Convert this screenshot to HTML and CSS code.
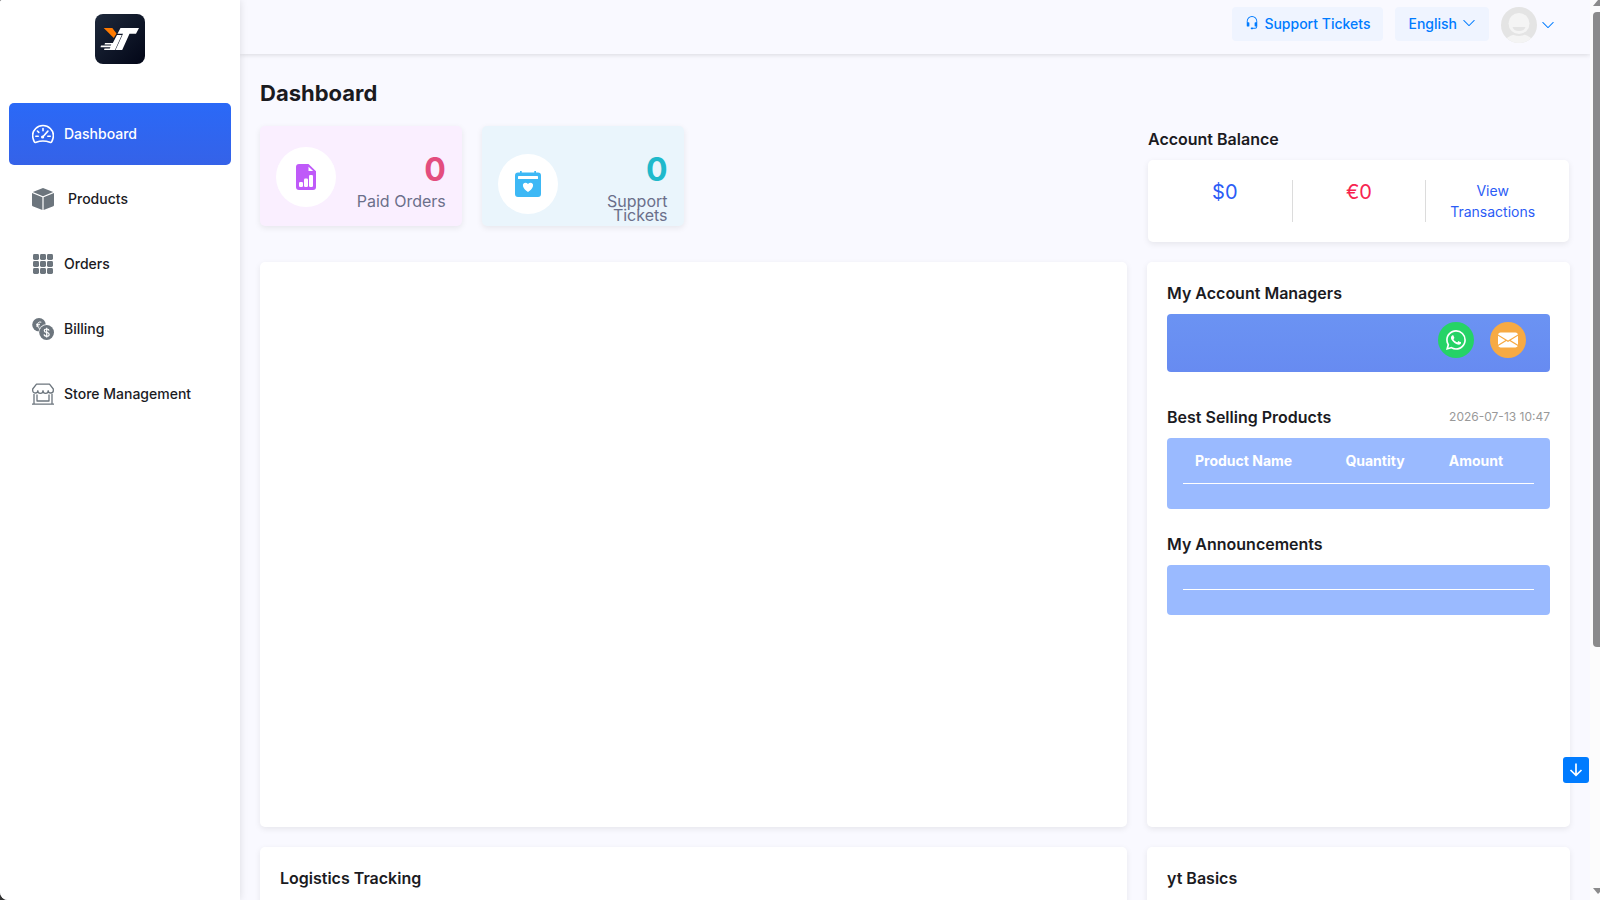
FILE: index.html
```html
<!DOCTYPE html>
<html lang="en">
<head>
  <meta charset="UTF-8">
  <title>Dashboard</title>
  <meta name="viewport" content="width=device-width, initial-scale=1.0">
  <link rel="stylesheet" href="styles.css">
</head>
<body>

  <aside class="sidebar">
    <a class="logo" href="#" aria-label="YT home">
      <svg viewBox="0 0 50 50" width="50" height="50">
        <defs>
          <linearGradient id="logoBg" x1="0" y1="0" x2="1" y2="1">
            <stop offset="0" stop-color="#1e293b"/>
            <stop offset="1" stop-color="#020617"/>
          </linearGradient>
        </defs>
        <rect width="50" height="50" rx="8" fill="url(#logoBg)"/>
        <path fill="#ff7a00" d="M8.700 14h8.600l4.200 5.500-2.700 4.500z"/>
        <path fill="#fff" d="M25.500 14H44l-3 5.800h-6.500L27.200 36H20.500L28 19.800h-5.500z"/>
        <path fill="#fff" d="M22 21h4.800L20 36h-7.500H9l.5-1.500h5.300l.6-1.300H5.500l.5-1.600h9.800l.5-1.200H9.500l.5-1.500h7.800z"/>
      </svg>
    </a>

    <nav class="menu">
      <a class="menu-item active" href="#">
        <svg viewBox="0 0 22 22" width="22" height="22" fill="none" stroke="currentColor" stroke-width="1.600" stroke-linecap="round" stroke-linejoin="round">
          <path d="M2.200 18.600C-.4 13.200.6 8.500 3.700 5.500a10.300 10.300 0 0 1 14.600 0c3.100 3 4.100 7.700 1.500 13.100-.4.800-1.200 1-2 .7-4.500-1.700-9.100-1.700-13.600 0-.8.300-1.600.1-2-.7z"/>
          <path d="M11 5.500v2.300M5.400 8l1.400 1.400M3.800 13.200h2.400M15.800 13.200h2.400M10.500 14.200l5.400-6.100"/>
          <circle cx="10.600" cy="14" r=".8"/>
        </svg>
        <span>Dashboard</span>
      </a>
      <a class="menu-item" href="#">
        <svg viewBox="0 0 22 22" width="22" height="22" fill="currentColor">
          <path d="M11 0l10.200 3.900L11 8.200.8 3.900z"/>
          <path d="M0 5l10.400 4.300V22L.7 18.200A1 1 0 0 1 0 17.300zM22 5L11.600 9.300V22l9.700-3.800a1 1 0 0 0 .7-.9z"/>
        </svg>
        <span class="indent">Products</span>
      </a>
      <a class="menu-item" href="#">
        <svg viewBox="0 0 22 22" width="22" height="22" fill="currentColor">
          <rect x="1" y="1" width="6" height="6" rx="1.400"/><rect x="8" y="1" width="6" height="6" rx="1.400"/><rect x="15" y="1" width="6" height="6" rx="1.400"/>
          <rect x="1" y="8" width="6" height="6" rx="1.400"/><rect x="8" y="8" width="6" height="6" rx="1.400"/><rect x="15" y="8" width="6" height="6" rx="1.400"/>
          <rect x="1" y="15" width="6" height="6" rx="1.400"/><rect x="8" y="15" width="6" height="6" rx="1.400"/><rect x="15" y="15" width="6" height="6" rx="1.400"/>
        </svg>
        <span>Orders</span>
      </a>
      <a class="menu-item" href="#">
        <svg viewBox="0 0 22 22" width="22" height="22">
          <circle cx="7" cy="6.800" r="6.800" fill="currentColor"/>
          <path d="M9.300 4.200C6.800 3.400 5.400 5 5.400 7s1 3.200 2.300 3.300M4 6.300h4M4 8h3.300" fill="none" stroke="#fff" stroke-width="1"/>
          <circle cx="14.600" cy="14.500" r="8.200" fill="#fff"/>
          <circle cx="14.600" cy="14.500" r="7.400" fill="currentColor"/>
          <path d="M17 12.600c-.1-1-.9-1.600-2.300-1.600s-2.400.6-2.400 1.700c0 2.400 4.900 1.100 4.900 3.700 0 1.100-1 1.800-2.500 1.800s-2.500-.7-2.600-1.800M14.700 9.800v9.600" fill="none" stroke="#fff" stroke-width="1.200"/>
        </svg>
        <span>Billing</span>
      </a>
      <a class="menu-item" href="#">
        <svg viewBox="0 0 22 22" width="22" height="22" fill="none" stroke="currentColor" stroke-width="1.300" stroke-linejoin="round">
          <path d="M4.500 1.200h13L21.300 6v1.200a2.500 2.500 0 0 1-5.100.5 2.600 2.600 0 0 1-5.200 0 2.600 2.600 0 0 1-5.200 0 2.500 2.500 0 0 1-5.100-.5V6z"/>
          <path d="M0 21.200h22M2 11v10M20 11v10M5 11.500V18h12v-6.500"/>
        </svg>
        <span>Store Management</span>
      </a>
    </nav>
  </aside>

  <div class="page">
    <header class="topbar">
      <a class="top-btn" href="#">
        <svg viewBox="0 0 16 16" width="14" height="14" fill="currentColor"><path d="M8 1a5 5 0 0 0-5 5v1h1a1 1 0 0 1 1 1v3a1 1 0 0 1-1 1H3a1 1 0 0 1-1-1V6a6 6 0 1 1 12 0v6a2.500 2.500 0 0 1-2.500 2.500H9.366a1 1 0 0 1-.866.5h-1a1 1 0 1 1 0-2h1a1 1 0 0 1 .866.5H11.500A1.500 1.500 0 0 0 13 12h-1a1 1 0 0 1-1-1V8a1 1 0 0 1 1-1h1V6a5 5 0 0 0-5-5z"/></svg>
        Support Tickets
      </a>
      <button class="top-btn" type="button">
        English
        <svg viewBox="0 0 16 16" width="14" height="14" fill="currentColor"><path d="M1.646 4.646a.5.5 0 0 1 .708 0L8 10.293l5.646-5.647a.5.5 0 0 1 .708.708l-6 6a.5.5 0 0 1-.708 0l-6-6a.5.5 0 0 1 0-.708z"/></svg>
      </button>
      <button class="user-btn" type="button" aria-label="Account menu">
        <svg viewBox="0 0 36 36" width="36" height="36">
          <defs><clipPath id="avatarClip"><circle cx="18" cy="18" r="18"/></clipPath></defs>
          <g clip-path="url(#avatarClip)">
            <rect width="36" height="36" fill="#e4e4e4"/>
            <ellipse cx="18" cy="37" rx="15" ry="10" fill="#f4f4f4"/>
            <circle cx="18" cy="17" r="12" fill="#e4e4e4"/>
            <circle cx="18" cy="16.500" r="10.500" fill="#f4f4f4"/>
            <path d="M11.500 20h13c-1 3-3.500 4-6.500 4s-5.500-1-6.500-4z" fill="#e4e4e4"/>
          </g>
        </svg>
        <svg viewBox="0 0 16 16" width="14" height="14" fill="currentColor"><path d="M1.646 4.646a.5.5 0 0 1 .708 0L8 10.293l5.646-5.647a.5.5 0 0 1 .708.708l-6 6a.5.5 0 0 1-.708 0l-6-6a.5.5 0 0 1 0-.708z"/></svg>
      </button>
    </header>

    <main class="content">
      <h1>Dashboard</h1>

      <div class="row">
        <div class="stats">
          <div class="stat stat-pink">
            <div class="stat-icon">
              <svg viewBox="0 0 26 26" width="26" height="26">
                <path fill="#bf5af9" d="M6 0h9.500L23 7.200V23a3 3 0 0 1-3 3H6a3 3 0 0 1-3-3V3a3 3 0 0 1 3-3z"/>
                <path fill="#fff" d="M15.500 2.800V7h4.700z"/>
                <rect x="6" y="18" width="4" height="5" rx="1.200" fill="#fff"/><rect x="11" y="14.500" width="4" height="8.500" rx="1.200" fill="#fff"/><rect x="16" y="11" width="4" height="12" rx="1.200" fill="#fff"/>
              </svg>
            </div>
            <div class="stat-text">
              <div class="stat-value">0</div>
              <div class="stat-label">Paid Orders</div>
            </div>
          </div>
          <div class="stat stat-blue">
            <div class="stat-icon">
              <svg viewBox="0 0 26 26" width="26" height="26">
                <path fill="#3db8f5" d="M5 0h1.700v1.500h12.600V0H21v1.500h2a3 3 0 0 1 3 3V23a3 3 0 0 1-3 3H3a3 3 0 0 1-3-3V4.500a3 3 0 0 1 3-3h2z"/>
                <rect x="3" y="5" width="20" height="3" rx=".6" fill="#fff"/>
                <path fill="#fff" d="M13 13c2.200-2.300 6-.9 4.900 2.500C17.300 17.500 15.400 19.500 13 21c-2.400-1.500-4.300-3.500-4.900-5.500C7 12.100 10.800 10.700 13 13z"/>
              </svg>
            </div>
            <div class="stat-text">
              <div class="stat-value">0</div>
              <div class="stat-label">Support Tickets</div>
            </div>
          </div>
        </div>

        <section class="balance">
          <h2>Account Balance</h2>
          <div class="card balance-card">
            <div class="usd">$0</div>
            <div class="eur">€0</div>
            <div><a href="#">View Transactions</a></div>
          </div>
        </section>

        <section class="card chart"></section>

        <section class="card">
          <h2>My Account Managers</h2>
          <div class="managers">
            <a class="round whatsapp" href="#" aria-label="WhatsApp">
              <svg viewBox="0 0 16 16" width="20" height="20" fill="currentColor"><path d="M13.601 2.326A7.854 7.854 0 0 0 7.994 0C3.627 0 .068 3.558.064 7.926c0 1.399.366 2.760 1.057 3.965L0 16l4.204-1.102a7.933 7.933 0 0 0 3.790.965h.004c4.368 0 7.926-3.558 7.930-7.930A7.898 7.898 0 0 0 13.600 2.326zM7.994 14.521a6.573 6.573 0 0 1-3.356-.92l-.24-.144-2.494.654.666-2.433-.156-.251a6.560 6.560 0 0 1-1.007-3.505c0-3.626 2.957-6.584 6.591-6.584a6.560 6.560 0 0 1 4.660 1.931 6.557 6.557 0 0 1 1.928 4.660c-.004 3.639-2.961 6.592-6.592 6.592zm3.615-4.934c-.197-.099-1.170-.578-1.353-.646-.182-.065-.315-.099-.445.099-.133.197-.513.646-.627.775-.114.133-.232.148-.43.050-.197-.1-.836-.308-1.592-.985-.59-.525-.985-1.175-1.103-1.372-.114-.198-.011-.304.088-.403.087-.088.197-.232.296-.346.1-.114.133-.198.198-.33.065-.134.034-.248-.015-.347-.05-.099-.445-1.076-.612-1.470-.16-.389-.323-.335-.445-.34-.114-.007-.247-.007-.38-.007a.729.729 0 0 0-.529.247c-.182.198-.691.677-.691 1.654 0 .977.710 1.916.810 2.049.098.133 1.394 2.132 3.383 2.992.470.205.840.326 1.129.418.475.152.904.129 1.246.080.380-.058 1.171-.48 1.338-.943.164-.464.164-.86.114-.992-.049-.133-.182-.198-.38-.297z"/></svg>
            </a>
            <a class="round email" href="#" aria-label="Email">
              <svg viewBox="0 0 16 16" width="20" height="20" fill="currentColor"><path d="M.05 3.555A2 2 0 0 1 2 2h12a2 2 0 0 1 1.950 1.555L8 8.414.05 3.555ZM0 4.697v7.104l5.803-3.558L0 4.697ZM6.761 8.830l-6.570 4.027A2 2 0 0 0 2 14h12a2 2 0 0 0 1.808-1.144l-6.570-4.027L8 9.586l-1.239-.757Zm3.436-.586L16 11.801V4.697l-5.803 3.546Z"/></svg>
            </a>
          </div>

          <div class="heading-row">
            <h2>Best Selling Products</h2>
            <time>2026-07-13 10:47</time>
          </div>
          <div class="box">
            <table>
              <thead>
                <tr><th>Product Name</th><th>Quantity</th><th>Amount</th></tr>
              </thead>
            </table>
          </div>

          <h2 class="spaced">My Announcements</h2>
          <div class="box announcements"><hr></div>
        </section>

        <section class="card">
          <h2>Logistics Tracking</h2>
        </section>
        <section class="card">
          <h2>yt Basics</h2>
        </section>
      </div>
    </main>
  </div>

  <button class="to-bottom" type="button" aria-label="Scroll down">
    <svg viewBox="0 0 14 14" width="14" height="14" fill="none" stroke="currentColor" stroke-width="1.700"><path d="M7 .5v12M1.500 7L7 12.300 12.500 7"/></svg>
  </button>

  <div class="scrollbar" aria-hidden="true">
    <svg viewBox="0 0 7 6" width="7" height="6"><path fill="#8b8b8b" d="M5 0L0 6h7V0z"/></svg>
    <div class="thumb"></div>
    <svg viewBox="0 0 7 6" width="7" height="6"><path fill="#8b8b8b" d="M0 0h7v4L5 6z"/></svg>
  </div>

</body>
</html>
```

FILE: styles.css
```css
:root {
  --bg: #f9f9ff;
  --text: #1b1b1f;
  --blue: #2b5cf6;
  --link: #007bff;
  --muted: #6c757d;
  --shadow: 0 2px 6px rgba(0, 0, 0, 0.08);
}

* {
  box-sizing: border-box;
}

html {
  background: #333;
}

body {
  margin: 0;
  height: 100vh;
  display: flex;
  overflow: hidden;
  background: var(--bg);
  border-radius: 2px 0 0 8px;
  font-family: Inter, "Liberation Sans", sans-serif;
  font-size: 14px;
  line-height: 21px;
  color: var(--text);
}

a {
  color: inherit;
  text-decoration: none;
}

button {
  border: none;
  padding: 0;
  background: none;
  font: inherit;
  cursor: pointer;
}

h1, h2 {
  margin: 0;
  font-weight: 600;
}

h1 {
  margin-bottom: 18px;
  font-size: 22px;
  font-weight: 700;
  line-height: 30px;
}

h2 {
  margin-bottom: 10px;
  font-size: 16px;
  line-height: 22px;
}

svg {
  display: block;
  flex: none;
}

/* sidebar */
.sidebar {
  flex: none;
  width: 240px;
  padding: 14px 9px;
  background: #fff;
  box-shadow: 0 0 8px rgba(0, 0, 0, 0.12);
  z-index: 2;
}

.logo {
  display: flex;
  justify-content: center;
  margin-bottom: 39px;
}

.menu {
  display: flex;
  flex-direction: column;
  gap: 3px;
}

.menu-item {
  display: flex;
  align-items: center;
  gap: 10px;
  height: 62px;
  padding: 0 23px;
  border-radius: 5px;
  font-weight: 500;
}

.menu-item svg {
  color: var(--muted);
}

.menu-item span {
  padding-bottom: 2px;
}

.menu-item .indent {
  padding-left: 4px;
}

.menu-item.active {
  background: linear-gradient(#2a69f7, #3562e8);
  color: #fff;
}

.menu-item.active svg {
  color: #fff;
}

/* top bar */
.page {
  flex: 1;
  min-width: 0;
  padding-right: 10px;
}

.topbar {
  display: flex;
  justify-content: flex-end;
  align-items: flex-start;
  gap: 12px;
  height: 54px;
  padding: 7px 35px 0 20px;
  box-shadow: 0 1px 5px rgba(0, 0, 0, 0.13);
}

.top-btn {
  display: flex;
  align-items: center;
  gap: 5px;
  height: 34px;
  padding: 0 13px 2px;
  border-radius: 4px;
  background: #eff4ff;
  color: var(--link);
  font-weight: 500;
}

.user-btn {
  display: flex;
  align-items: center;
  gap: 4px;
  color: var(--link);
}

/* content */
.content {
  padding: 24px 20px;
}

.row {
  display: grid;
  grid-template-columns: 867fr 423fr;
  grid-template-rows: auto 565px;
  gap: 20px;
}

.card {
  padding: 20px;
  border-radius: 5px;
  background: #fff;
  box-shadow: var(--shadow);
}

.stats {
  display: grid;
  grid-template-columns: repeat(4, 1fr);
  gap: 20px;
  align-items: start;
}

/* rows keep their own height, so a two-line label pushes the icon down */
.stat {
  display: grid;
  grid-template-columns: 60px 1fr;
  align-content: start;
  align-items: center;
  height: 100px;
  padding: 20px 16px 0;
  border-radius: 5px;
  box-shadow: var(--shadow);
}

.stat-pink {
  background: #faefff;
}

.stat-blue {
  background: #eaf5fc;
}

.stat-icon {
  display: flex;
  align-items: center;
  justify-content: center;
  height: 60px;
  border-radius: 50%;
  background: #fff;
}

.stat-text {
  text-align: right;
}

.stat-value {
  font-size: 32px;
  font-weight: 700;
  line-height: 48px;
}

.stat-label {
  font-size: 16px;
  line-height: 14px;
  color: #6b6f8a;
}

.stat-pink .stat-value {
  color: #e34d7e;
}

.stat-blue .stat-value {
  color: #1fb9cb;
}

.balance {
  align-self: end;
  padding: 2px 1px 0;
}

.balance-card {
  display: grid;
  grid-template-columns: repeat(3, 1fr);
  padding: 20px 10px;
  text-align: center;
}

.balance-card > div {
  padding: 0 12px;
}

.balance-card > div + div {
  border-left: 1px solid #dcdcdc;
}

.balance-card a {
  color: var(--blue);
}

.usd, .eur {
  font-size: 20px;
  line-height: 24px;
}

.usd {
  color: var(--blue);
}

.eur {
  color: #f7234f;
}

.managers {
  display: flex;
  justify-content: flex-end;
  gap: 16px;
  height: 58px;
  margin-bottom: 34px;
  padding: 8px 24px;
  border-radius: 4px;
  background: linear-gradient(#6b93f3, #678bf1);
}

.round {
  display: flex;
  align-items: center;
  justify-content: center;
  width: 36px;
  height: 36px;
  border-radius: 50%;
  color: #fff;
}

.whatsapp {
  background: #25d366;
}

.email {
  background: #f7aa43;
}

.heading-row {
  display: flex;
  justify-content: space-between;
}

time {
  font-size: 12px;
  color: #999;
}

.box {
  padding: 0 16px 25px;
  border-radius: 4px;
  background: #9abaff;
}

table {
  width: 100%;
  border-collapse: collapse;
}

th {
  padding: 12px;
  border-bottom: 1px solid #fff;
  color: #fff;
  font-weight: 700;
  text-align: left;
}

.spaced {
  margin-top: 24px;
}

.announcements {
  padding-top: 24px;
}

hr {
  margin: 0;
  border: none;
  border-top: 1px solid #fff;
}

.to-bottom {
  position: fixed;
  right: 11px;
  bottom: 117px;
  display: flex;
  align-items: center;
  justify-content: center;
  width: 26px;
  height: 26px;
  border-radius: 3px;
  background: var(--link);
  color: #fff;
}

.scrollbar {
  position: fixed;
  top: 0;
  right: 0;
  bottom: 0;
  display: flex;
  flex-direction: column;
  align-items: flex-end;
  width: 10px;
  padding-bottom: 6px;
  background: #fcfcfc;
}

.thumb {
  width: 7px;
  height: 71%;
  margin: 6px 0 auto;
  border-radius: 4px 0 0 4px;
  background: #8b8b8b;
}
```
